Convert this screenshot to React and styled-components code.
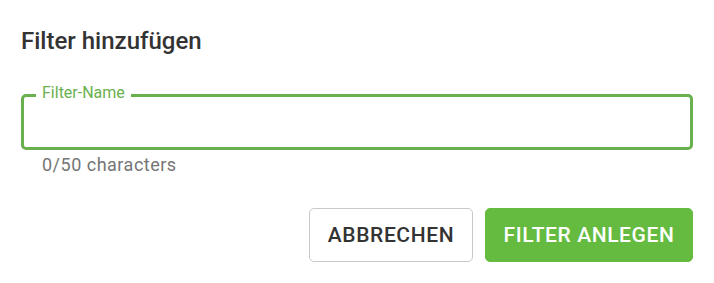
import React from 'react';
import styled, { createGlobalStyle } from 'styled-components';

const GlobalStyle = createGlobalStyle`
  html, body {
    margin: 0;
    padding: 0;
    background: #fff;
  }

  body {
    font-family: Roboto, 'Liberation Sans', sans-serif;
  }

  * {
    box-sizing: border-box;
  }
`;

const Dialog = styled.section`
  width: 714px;
  padding: 27px 21px 0;
`;

const Title = styled.h2`
  margin: 0;
  font-weight: 500;
  font-size: 24px;
  line-height: 28px;
  color: #333;
`;

const Field = styled.div`
  position: relative;
  margin: 39px 0 0;
  height: 56px;
  border: 3px solid #6ab04f;
  border-radius: 5px;
`;

const Label = styled.label`
  position: absolute;
  top: -13px;
  left: 12px;
  padding: 0 6px;
  background: #fff;
  font-size: 16px;
  line-height: 18px;
  color: #6ab04f;
`;

const Input = styled.input`
  width: 100%;
  height: 100%;
  padding: 0 18px;
  border: none;
  outline: none;
  background: transparent;
  font-family: inherit;
  font-size: 16px;
`;

const Helper = styled.p`
  margin: 4px 0 0;
  padding: 0 21px;
  font-size: 18px;
  line-height: 22px;
  letter-spacing: 0.5px;
  color: #757575;
`;

const Actions = styled.div`
  display: flex;
  justify-content: flex-end;
  gap: 12px;
  margin: 32px 0 0;
`;

const Button = styled.button`
  height: 54px;
  width: ${({ $width }) => $width}px;
  padding: 0;
  border: 1px solid ${({ $primary }) => ($primary ? '#64bb3f' : '#c9c9c9')};
  border-radius: 5px;
  background: ${({ $primary }) => ($primary ? '#64bb3f' : '#fff')};
  color: ${({ $primary }) => ($primary ? '#fff' : '#333')};
  font-family: inherit;
  font-weight: 500;
  font-size: 21px;
  letter-spacing: 0.6px;
  text-transform: uppercase;
  cursor: pointer;
`;

const App = () => {
  return (
    <>
      <GlobalStyle />
      <Dialog>
        <Title>Filter hinzufügen</Title>
        <Field>
          <Label htmlFor="filter-name">Filter-Name</Label>
          <Input id="filter-name" type="text" maxLength={50} />
        </Field>
        <Helper>0/50 characters</Helper>
        <Actions>
          <Button $width={164}>Abbrechen</Button>
          <Button $width={208} $primary>
            Filter anlegen
          </Button>
        </Actions>
      </Dialog>
    </>
  );
};

export default App;
